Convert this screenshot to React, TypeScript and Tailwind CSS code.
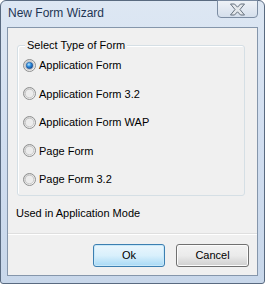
import React from "react";

function Radio({ checked }: { checked?: boolean }) {
  return (
    <svg width="13" height="13" viewBox="0 0 13 13" className="shrink-0">
      <defs>
        <linearGradient id="rg" x1="0" y1="0" x2="1" y2="1">
          <stop offset="0" stopColor="#cfcfcf" />
          <stop offset="1" stopColor="#fdfdfd" />
        </linearGradient>
        <radialGradient id="dot" cx="0.4" cy="0.35" r="0.7">
          <stop offset="0" stopColor="#b7e6ff" />
          <stop offset="0.45" stopColor="#2e8ddd" />
          <stop offset="1" stopColor="#0e3f8a" />
        </radialGradient>
      </defs>
      <circle cx="6.5" cy="6.5" r="6" fill="url(#rg)" stroke="#8e8f8f" strokeWidth="1" />
      <circle cx="6.5" cy="6.5" r="4.3" fill="#ececec" stroke="#b0b0b0" strokeWidth="0.6" />
      {checked && <circle cx="6.5" cy="6.5" r="3.3" fill="url(#dot)" stroke="#1a4f8f" strokeWidth="0.5" />}
    </svg>
  );
}

const options = [
  "Application Form",
  "Application Form 3.2",
  "Application Form WAP",
  "Page Form",
  "Page Form 3.2",
];

export default function App() {
  return (
    <div
      className="w-[265px] h-[284px] text-[11px] text-black"
      style={{ fontFamily: '"Liberation Sans", Arial, sans-serif' }}
    >
      <div className="relative w-[265px] h-[284px] border border-[#596a80] rounded-t-[6px] rounded-b-[3px] bg-gradient-to-b from-[#dde7f3] via-[#d1def0] to-[#c8d7ea] flex flex-col pl-[6px] pr-[6px] pb-[7px]">
        <div className="h-[26px] flex items-center pl-[1px] pb-[2px]">
          <span className="text-[12px] text-[#1e3553]">New Form Wizard</span>
        </div>
        <div className="absolute top-[-1px] right-[6px] w-[41px] h-[18px] border border-[#7c8da3] rounded-b-[4px] bg-gradient-to-b from-[#eef2f7] to-[#d5dfec] flex items-center justify-center">
          <svg width="17" height="13" viewBox="0 0 17 13">
            <path
              d="M1.5 1 L5.5 1 L8.5 4.2 L11.5 1 L15.5 1 L11 6.5 L15.5 12 L11.5 12 L8.5 8.8 L5.5 12 L1.5 12 L6 6.5 Z"
              fill="#e4e8ec"
              stroke="#66717e"
              strokeWidth="1"
              strokeLinejoin="round"
            />
          </svg>
        </div>
        <div className="flex-1 border border-[#8596ab] bg-[#f0f0f0] flex flex-col">
          <div className="relative mt-[17px] ml-[9px] w-[228px] h-[151px] border border-[#d5dfe5] rounded-[3px] shadow-[inset_1px_1px_0_#fff] flex flex-col pt-[5px] pl-[5px]">
            <span className="absolute top-[-9px] left-[7px] px-[2px] bg-[#f0f0f0] leading-[16px]">
              Select Type of Form
            </span>
            {options.map((o, i) => (
              <div key={o} className="h-[28.5px] flex items-center gap-[3px]">
                <Radio checked={i === 0} />
                <span>{o}</span>
              </div>
            ))}
          </div>
          <div className="ml-[8px] mt-[10px] leading-[15px]">Used in Application Mode</div>
          <div className="mt-[12px] h-[2px] border-t border-[#dfdfdf] bg-white" />
          <div className="flex justify-end gap-[11px] pr-[8px] pt-[9px]">
            <button className="w-[72px] h-[23px] rounded-[3px] border border-[#3c7fb1] bg-gradient-to-b from-[#eaf6fd] via-[#d9f0fc] to-[#a7d9f5] shadow-[inset_0_0_0_1px_#c8e8f9] text-[11px]">
              Ok
            </button>
            <button className="w-[73px] h-[23px] rounded-[3px] border border-[#707070] bg-gradient-to-b from-[#f2f2f2] via-[#ebebeb] to-[#cfcfcf] shadow-[inset_0_0_0_1px_#fcfcfc] text-[11px]">
              Cancel
            </button>
          </div>
        </div>
      </div>
    </div>
  );
}
